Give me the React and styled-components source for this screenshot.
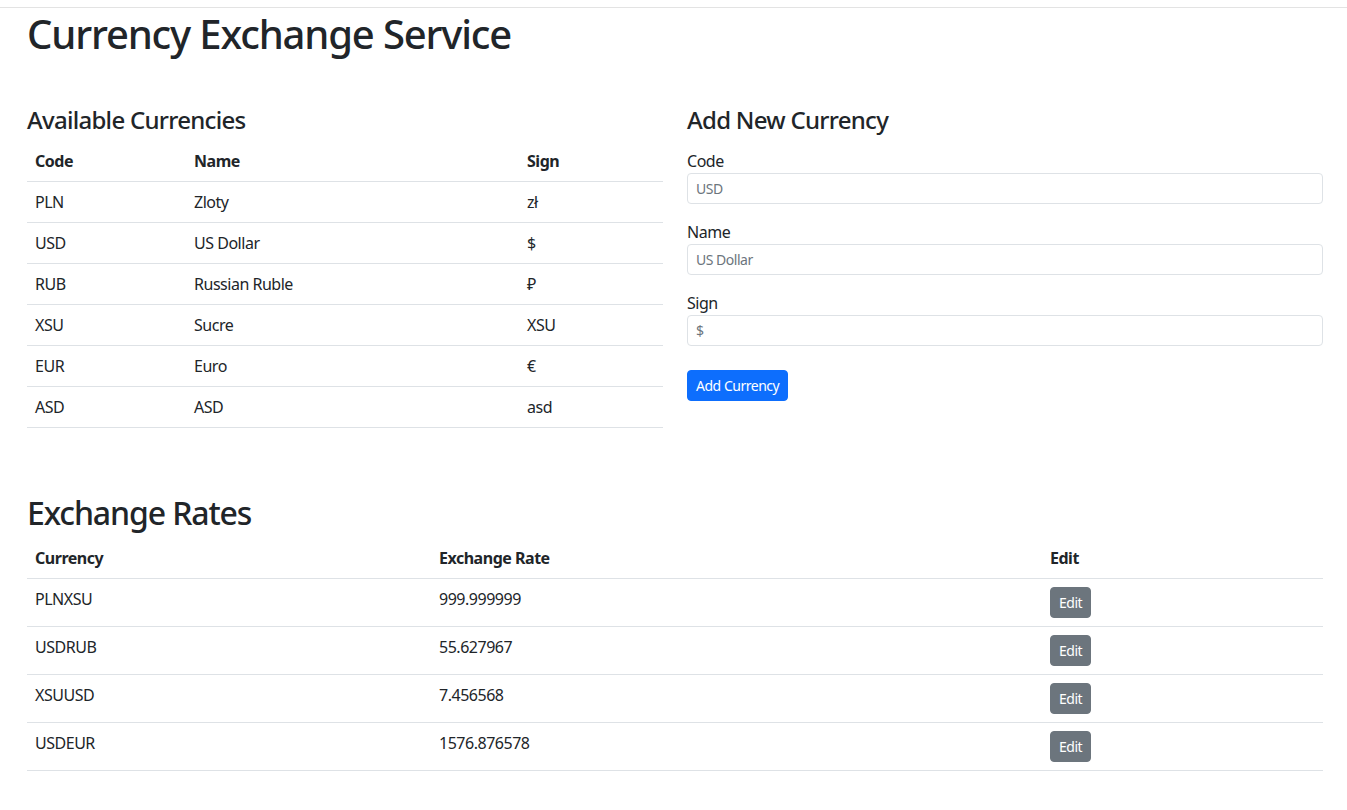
import React from "react";
import styled, { createGlobalStyle } from "styled-components";

const GlobalStyle = createGlobalStyle`
  body {
    margin: 0;
    font-family: "Noto Sans", "Open Sans", sans-serif;
    font-size: 16px;
    line-height: 1.5;
    letter-spacing: -0.03em;
    color: #212529;
    background: #fff;
  }
  * { box-sizing: border-box; }
`;

const TopRule = styled.div`
  margin-top: 7px;
  height: 1px;
  background-color: #e3e3e3;
`;

const Container = styled.div`
  padding: 0 24px 40px 27px;
`;

const Title = styled.h1`
  margin: 2px 0 0;
  font-size: 40px;
  font-weight: 500;
  line-height: 1.2;
  letter-spacing: -0.029em;
`;

const Row = styled.div`
  display: grid;
  grid-template-columns: 1fr 1fr;
  column-gap: 24px;
  margin-top: 48px;
`;

const SectionTitle = styled.h3`
  margin: 0 0 6px;
  font-size: 24px;
  font-weight: 500;
  line-height: 1.2;
  letter-spacing: -0.03em;
`;

const BigTitle = styled.h2`
  margin: 66px 0 6px;
  font-size: 32px;
  font-weight: 500;
  line-height: 1.2;
  letter-spacing: -0.035em;
`;

const Table = styled.table`
  width: 100%;
  border-collapse: collapse;
  table-layout: fixed;
  vertical-align: top;
`;

const Th = styled.th`
  text-align: left;
  font-weight: 700;
  padding: 8px;
  border-bottom: 1px solid #dee2e6;
`;

const Td = styled.td`
  padding: 8px;
  border-bottom: 1px solid #dee2e6;
  vertical-align: top;
`;

const Form = styled.form`
  display: flex;
  flex-direction: column;
  padding-top: 8px;
`;

const Field = styled.div`
  display: flex;
  flex-direction: column;
  margin-bottom: 16px;
`;

const Label = styled.label`
  display: block;
`;

const Input = styled.input`
  height: 31px;
  padding: 4px 8px;
  font-family: inherit;
  font-size: 14px;
  letter-spacing: inherit;
  color: #212529;
  border: 1px solid #dee2e6;
  border-radius: 4px;
  outline: none;
  &::placeholder {
    color: #6c757d;
  }
`;

const Button = styled.button`
  align-self: flex-start;
  height: 31px;
  padding: 4px 8px;
  font-family: inherit;
  font-size: 14px;
  letter-spacing: inherit;
  line-height: 1.5;
  color: #fff;
  background-color: ${({ variant }) => (variant === "secondary" ? "#6c757d" : "#0d6efd")};
  border: 1px solid ${({ variant }) => (variant === "secondary" ? "#6c757d" : "#0d6efd")};
  border-radius: 4px;
  cursor: pointer;
  margin-top: ${({ spaced }) => (spaced ? "8px" : "0")};
`;

const currencies = [
  ["PLN", "Zloty", "zł"],
  ["USD", "US Dollar", "$"],
  ["RUB", "Russian Ruble", "₽"],
  ["XSU", "Sucre", "XSU"],
  ["EUR", "Euro", "€"],
  ["ASD", "ASD", "asd"],
];

const rates = [
  ["PLNXSU", "999.999999"],
  ["USDRUB", "55.627967"],
  ["XSUUSD", "7.456568"],
  ["USDEUR", "1576.876578"],
];

export default function App() {
  return (
    <>
      <GlobalStyle />
      <TopRule />
      <Container>
        <Title>Currency Exchange Service</Title>
        <Row>
          <div>
            <SectionTitle>Available Currencies</SectionTitle>
            <Table>
              <colgroup>
                <col style={{ width: 159 }} />
                <col style={{ width: 333 }} />
                <col />
              </colgroup>
              <thead>
                <tr>
                  <Th>Code</Th>
                  <Th>Name</Th>
                  <Th>Sign</Th>
                </tr>
              </thead>
              <tbody>
                {currencies.map(([code, name, sign]) => (
                  <tr key={code}>
                    <Td>{code}</Td>
                    <Td>{name}</Td>
                    <Td>{sign}</Td>
                  </tr>
                ))}
              </tbody>
            </Table>
          </div>
          <div>
            <SectionTitle>Add New Currency</SectionTitle>
            <Form onSubmit={(e) => e.preventDefault()}>
              <Field>
                <Label>Code</Label>
                <Input placeholder="USD" />
              </Field>
              <Field>
                <Label>Name</Label>
                <Input placeholder="US Dollar" />
              </Field>
              <Field>
                <Label>Sign</Label>
                <Input placeholder="$" />
              </Field>
              <Button spaced type="submit">Add Currency</Button>
            </Form>
          </div>
        </Row>

        <BigTitle>Exchange Rates</BigTitle>
        <Table>
          <colgroup>
            <col style={{ width: 404 }} />
            <col style={{ width: 611 }} />
            <col />
          </colgroup>
          <thead>
            <tr>
              <Th>Currency</Th>
              <Th>Exchange Rate</Th>
              <Th>Edit</Th>
            </tr>
          </thead>
          <tbody>
            {rates.map(([pair, rate]) => (
              <tr key={pair}>
                <Td>{pair}</Td>
                <Td>{rate}</Td>
                <Td>
                  <Button variant="secondary">Edit</Button>
                </Td>
              </tr>
            ))}
          </tbody>
        </Table>
      </Container>
    </>
  );
}
